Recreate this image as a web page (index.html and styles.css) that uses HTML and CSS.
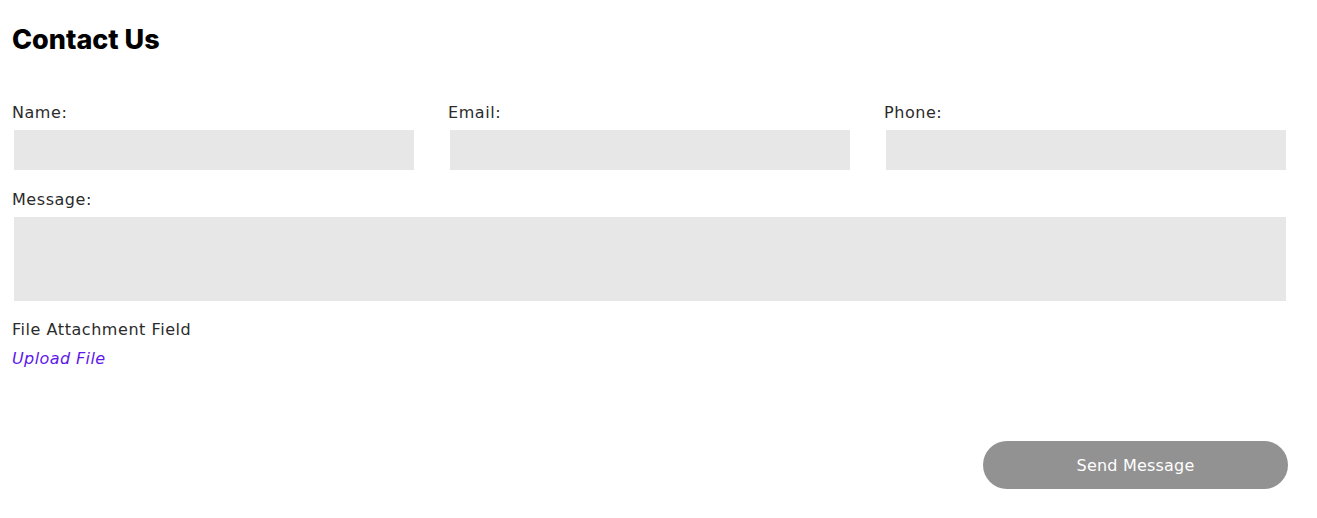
FILE: index.html
```html
<!DOCTYPE html>
<html lang="en">
<head>
<meta charset="utf-8">
<title>Contact Us</title>
<link rel="stylesheet" href="styles.css">
</head>
<body>
<main class="page">
  <h1 class="title">Contact Us</h1>
  <form class="form">
    <div class="row three">
      <div class="field">
        <label class="label">Name:</label>
        <div class="input"></div>
      </div>
      <div class="field">
        <label class="label">Email:</label>
        <div class="input"></div>
      </div>
      <div class="field">
        <label class="label">Phone:</label>
        <div class="input"></div>
      </div>
    </div>
    <div class="field message">
      <label class="label">Message:</label>
      <div class="textarea"></div>
    </div>
    <div class="file">
      <div class="label">File Attachment Field</div>
      <a class="upload">Upload File</a>
    </div>
    <div class="actions">
      <button type="button" class="send">Send Message</button>
    </div>
  </form>
</main>
</body>
</html>
```

FILE: styles.css
```css
* { box-sizing: border-box; }
html, body { margin: 0; padding: 0; background: #fff; }
body {
  font-family: "DejaVu Sans", "Open Sans", sans-serif;
  color: #222;
}
.page {
  width: 1300px;
  padding: 0 12px;
}
.title {
  margin: 24px 0 0;
  font-family: "Inter", "Open Sans", sans-serif;
  font-weight: 800;
  font-size: 27px;
  line-height: 32px;
  color: #000;
  letter-spacing: 0;
}
.form { margin-top: 45px; width: 1276px; }
.row.three {
  display: grid;
  grid-template-columns: 404px 404px 404px;
  column-gap: 32px;
}
.label {
  display: block;
  font-size: 16px;
  font-weight: 400;
  letter-spacing: 0.55px;
  line-height: 24px;
  color: #2b2b2b;
}
.input {
  margin: 5px 2px 0;
  height: 40px;
  background: #e7e7e7;
}
.message { margin-top: 18px; }
.textarea {
  margin: 5px 2px 0;
  height: 84px;
  background: #e7e7e7;
}
.file { margin-top: 17px; }
.upload {
  display: block;
  margin-top: 5px;
  font-style: italic;
  font-size: 16px;
  font-weight: 400;
  letter-spacing: 0.4px;
  line-height: 24px;
  color: #5e17eb;
}
.actions {
  display: flex;
  justify-content: flex-end;
  margin-top: 70px;
}
.send {
  width: 305px;
  height: 48px;
  border: 0;
  border-radius: 24px;
  background: #929292;
  color: #fff;
  font-family: "DejaVu Sans", sans-serif;
  font-size: 16px;
  font-weight: 400;
  letter-spacing: 0.2px;
}
```
